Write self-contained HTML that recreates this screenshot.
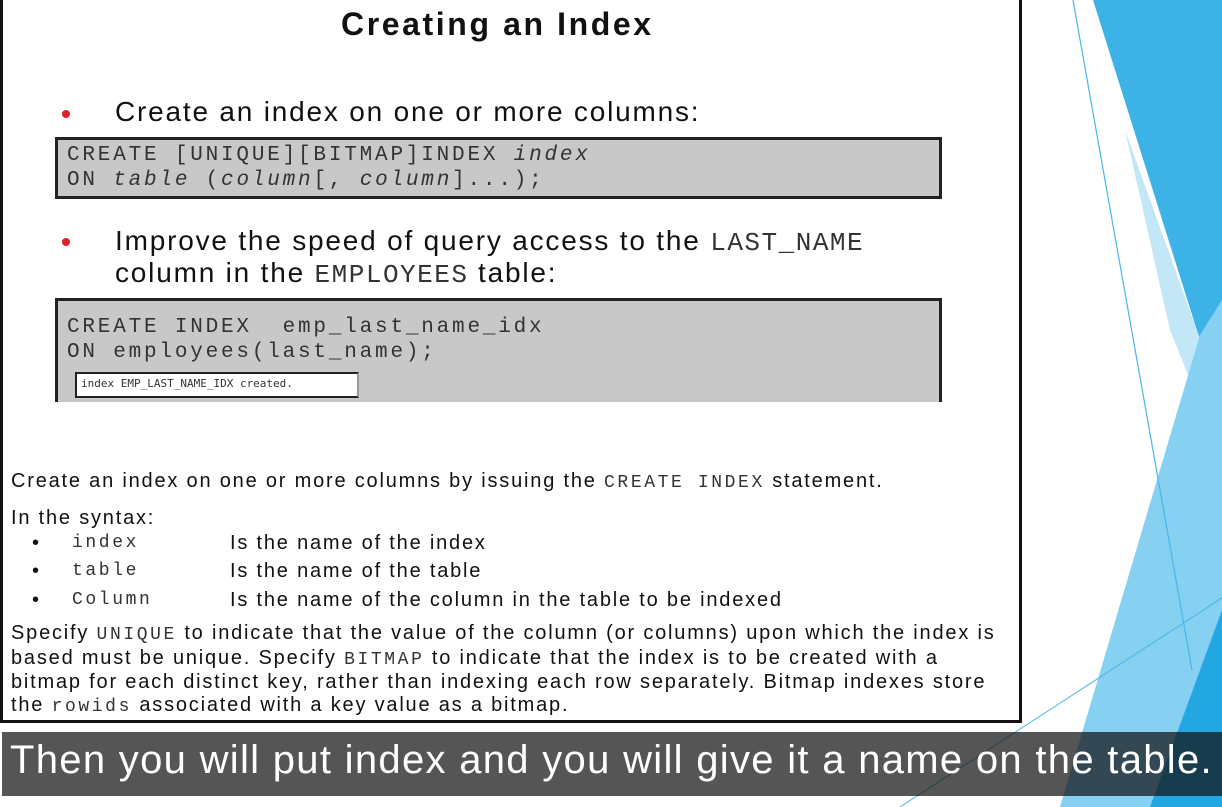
<!DOCTYPE html>
<html><head><meta charset="utf-8"><style>
*{margin:0;padding:0;box-sizing:border-box}
body{width:1222px;height:807px;overflow:hidden;background:#fff;position:relative;font-family:"Liberation Sans",Arial,sans-serif;color:#111}
.a{position:absolute;white-space:pre}
.m{font-family:"Liberation Mono","Courier New",monospace}
.slide{position:absolute;left:0;top:-4px;width:1022px;height:727px;border:3px solid #111;background:#fff}
.code{position:absolute;left:55px;width:887px;background:#c8c8c8;border:3px solid #222}
.ct{font-family:"Liberation Mono",monospace;font-size:21px;color:#333;letter-spacing:2.8px;line-height:25px}
.n{font-size:20px;letter-spacing:1.8px;color:#111}
.nm{font-family:"Liberation Mono",monospace;font-size:18px;letter-spacing:2.6px;color:#333}
.bul{position:absolute;width:8px;height:8px;border-radius:50%;background:#e02020}
.bt{font-size:28px;letter-spacing:1.8px}
.bm{font-family:"Liberation Mono",monospace;font-size:26px;letter-spacing:1.5px;color:#333}
</style></head><body>
<svg class="a" style="left:0;top:0" width="1222" height="807">
<polygon points="1093,0 1222,0 1222,410" fill="#3db2e7"/>
<polygon points="1125,130 1222,400 1222,460 1170,330" fill="#c4e7f8"/>
<polygon points="1060,807 1200,335 1222,300 1222,807" fill="#86d1f2"/>
<polygon points="1150,807 1222,610 1222,807" fill="#23a7e0"/>
<line x1="1073" y1="0" x2="1192" y2="670" stroke="#49b5e8" stroke-width="1.2"/>
<line x1="900" y1="807" x2="1222" y2="598" stroke="#49b5e8" stroke-width="1"/>
</svg>
<div class="slide"></div>
<div class="a" style="left:341px;top:6px;font-size:32px;font-weight:bold;letter-spacing:2.6px">Creating an Index</div>
<div class="bul" style="left:62px;top:110px"></div>
<div class="a bt" style="left:115px;top:96px">Create an index on one or more columns:</div>
<div class="code" style="top:137px;height:62px"></div>
<div class="a ct" style="left:67px;top:143px">CREATE [UNIQUE][BITMAP]INDEX <i>index</i>
ON <i>table</i> (<i>column</i>[, <i>column</i>]...);</div>
<div class="bul" style="left:62px;top:238px"></div>
<div class="a bt" style="left:115px;top:226px;line-height:30px">Improve the speed of query access to the <span class="bm">LAST_NAME</span>
column in the <span class="bm">EMPLOYEES</span> table:</div>
<div class="code" style="top:298px;height:104px;border-bottom:none"></div>
<div class="a ct" style="left:67px;top:315px">CREATE INDEX  emp_last_name_idx
ON employees(last_name);</div>
<div class="a" style="left:75px;top:372px;width:284px;height:26px;background:#fff;border:2px solid #222;border-right-color:#999;font-size:11px;padding:3px 4px;font-family:'DejaVu Sans Mono',monospace;color:#333">index EMP_LAST_NAME_IDX created.</div>
<div class="a n" style="left:11px;top:470px">Create an index on one or more columns by issuing the <span class="nm">CREATE INDEX</span> statement.</div>
<div class="a n" style="left:11px;top:507px">In the syntax:</div>
<div class="a n" style="left:32px;top:532px">•</div><div class="a nm" style="left:72px;top:533px">index</div><div class="a n" style="left:230px;top:532px">Is the name of the index</div>
<div class="a n" style="left:32px;top:560px">•</div><div class="a nm" style="left:72px;top:561px">table</div><div class="a n" style="left:230px;top:560px">Is the name of the table</div>
<div class="a n" style="left:32px;top:589px">•</div><div class="a nm" style="left:72px;top:590px">Column</div><div class="a n" style="left:230px;top:589px">Is the name of the column in the table to be indexed</div>
<div class="a n" style="left:11px;top:622px;line-height:22.5px">Specify <span class="nm">UNIQUE</span> to indicate that the value of the column (or columns) upon which the index is
based must be unique. Specify <span class="nm">BITMAP</span> to indicate that the index is to be created with a
bitmap for each distinct key, rather than indexing each row separately. Bitmap indexes store
the <span class="nm">rowids</span> associated with a key value as a bitmap.</div>
<div class="a" style="left:2px;top:732px;width:1220px;height:64px;background:rgba(20,20,20,0.72)"></div>
<div class="a" style="left:10px;top:738px;font-size:40px;letter-spacing:1.3px;color:#fff">Then you will put index and you will give it a name on the table.</div>
</body></html>
